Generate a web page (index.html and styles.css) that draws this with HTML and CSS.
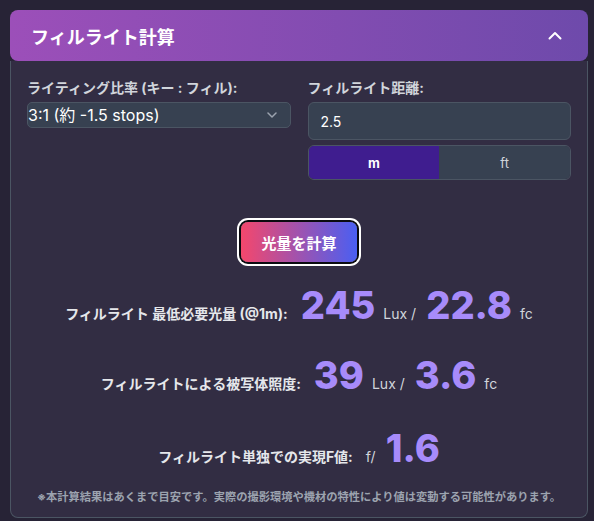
FILE: index.html
```html
<!DOCTYPE html>
<html>
    <head>
        <title>フィルライト計算</title>
        <link rel="stylesheet" href="styles.css">
    </head>
    <body>
        <div class="card">
            <div class="card-head">
                <h2>フィルライト計算</h2>
                <svg class="chev-up" width="14" height="9" viewBox="0 0 14 9">
                    <path d="M1.5 7.5 L7 2 L12.5 7.5" fill="none" stroke="#fff" stroke-width="2" stroke-linecap="round" stroke-linejoin="round"/>
                </svg>
            </div>

            <div class="card-body">
                <div class="fields">
                    <div class="field">
                        <label for="ratio">ライティング比率 (キー : フィル):</label>
                        <div class="select-wrap">
                            <select id="ratio">
                                <option>3:1 (約 -1.5 stops)</option>
                            </select>
                            <svg class="chev-down" width="10" height="6" viewBox="0 0 10 6">
                                <path d="M1 1 L5 5 L9 1" fill="none" stroke="#9ca3af" stroke-width="1.5" stroke-linecap="round" stroke-linejoin="round"/>
                            </svg>
                        </div>
                    </div>

                    <div class="field">
                        <label for="dist">フィルライト距離:</label>
                        <input id="dist" type="text" value="2.5">
                        <div class="units">
                            <button type="button" class="unit-btn active">m</button>
                            <button type="button" class="unit-btn">ft</button>
                        </div>
                    </div>
                </div>

                <div class="action">
                    <button type="button" class="calc">光量を計算</button>
                </div>

                <div class="result r1">
                    <span class="label">フィルライト 最低必要光量 (@1m):</span>
                    <span class="num">245</span>
                    <span class="unit">Lux /</span>
                    <span class="num">22.8</span>
                    <span class="unit">fc</span>
                </div>

                <div class="result r2">
                    <span class="label">フィルライトによる被写体照度:</span>
                    <span class="num">39</span>
                    <span class="unit">Lux /</span>
                    <span class="num">3.6</span>
                    <span class="unit">fc</span>
                </div>

                <div class="result r3">
                    <span class="label">フィルライト単独での実現F値:</span>
                    <span class="unit">f/</span>
                    <span class="num">1.6</span>
                </div>

                <p class="note">※本計算結果はあくまで目安です。実際の撮影環境や機材の特性により値は変動する可能性があります。</p>
            </div>
        </div>
    </body>
</html>
```

FILE: styles.css
```css
html {
    background: #272336;
}
body {
    margin: 0;
    padding: 10px 7px 0 10px;
    font-family: Inter, "Noto Sans CJK JP", sans-serif;
    color: #e5e7eb;
}
.card {
    width: 578px;
}
.card-head {
    height: 51px;
    padding: 0 26px 0 21px;
    display: flex;
    align-items: center;
    justify-content: space-between;
    border-radius: 8px;
    background: linear-gradient(90deg, #9c4fb9, #6e4aab);
}
.card-head h2 {
    margin: 0;
    font-size: 18px;
    font-weight: 700;
    color: #fff;
}
.card-body {
    height: 457px;
    padding: 17px 16px 0 16px;
    box-sizing: border-box;
    background: #322d43;
    border: 1px solid #4b5563;
    border-top: none;
    border-radius: 0 0 8px 8px;
}
.fields {
    display: grid;
    grid-template-columns: 1fr 1fr;
    gap: 17px;
}
.field label {
    display: block;
    font-size: 14px;
    font-weight: 700;
    line-height: 20px;
    color: #d1d5db;
    margin-bottom: 4px;
}
.select-wrap {
    position: relative;
}
.select-wrap select {
    width: 100%;
    height: 26px;
    padding: 0;
    appearance: none;
    background: #374151;
    border: 1px solid #4b5563;
    border-radius: 5px;
    color: #fff;
    font-family: Inter, "Noto Sans CJK JP", sans-serif;
    font-size: 16px;
    outline: none;
}
.chev-down {
    position: absolute;
    right: 14px;
    top: 10px;
}
.field input {
    width: 100%;
    height: 38px;
    box-sizing: border-box;
    padding: 0 12px;
    background: #374151;
    border: 1px solid #4b5563;
    border-radius: 6px;
    color: #fff;
    font-family: Inter, sans-serif;
    font-size: 14px;
    outline: none;
}
.units {
    margin-top: 5px;
    display: flex;
    height: 33px;
    border: 1px solid #4b5563;
    border-radius: 6px;
    overflow: hidden;
}
.unit-btn {
    flex: 1;
    border: none;
    background: #374151;
    color: #d1d5db;
    font-family: Inter, sans-serif;
    font-size: 13px;
}
.unit-btn.active {
    background: #3f1d8f;
    color: #fff;
    font-weight: 700;
}
.action {
    display: flex;
    justify-content: center;
    margin-top: 42px;
}
.calc {
    width: 116px;
    height: 40px;
    border: none;
    border-radius: 7px;
    background: linear-gradient(90deg, #f4476c, #4a5ff2);
    box-shadow: 0 0 0 2px #0b0b10, 0 0 0 4px #fff;
    color: #fff;
    font-family: Inter, "Noto Sans CJK JP", sans-serif;
    font-size: 15px;
    font-weight: 700;
}
.result {
    display: flex;
    justify-content: center;
    align-items: baseline;
    line-height: 1;
}
.r1 {
    margin-top: 24px;
}
.r2 {
    margin-top: 32px;
}
.r3 {
    margin-top: 35px;
}
.result .label {
    font-size: 14px;
    font-weight: 700;
    color: #e5e7eb;
    margin-right: 13px;
}
.result .num {
    font-size: 38px;
    font-weight: 800;
    color: #a78bfa;
    margin-right: 8px;
}
.result .unit {
    font-size: 14px;
    color: #d1d5db;
    margin-right: 10px;
}
.result > :last-child {
    margin-right: 0;
}
.note {
    margin: 21px 0 0 0;
    text-align: center;
    font-size: 11.25px;
    font-weight: 700;
    color: #9ca3af;
}
```
